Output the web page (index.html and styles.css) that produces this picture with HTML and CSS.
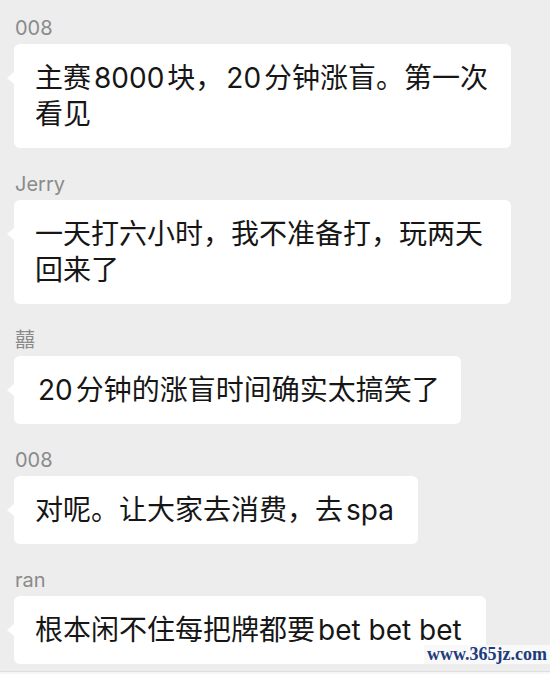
FILE: index.html
```html
<!DOCTYPE html>
<html lang="zh-CN">
<head>
<meta charset="utf-8">
<title>Chat</title>
<link rel="stylesheet" href="styles.css">
</head>
<body>
<div class="page">
  <main class="chat">
    <div class="msg">
      <div class="name">008</div>
      <div class="bubble">主赛<span class="lat">8000</span>块，<span class="lat">20</span>分钟涨盲。第一次看见</div>
    </div>
    <div class="msg">
      <div class="name">Jerry</div>
      <div class="bubble">一天打六小时，我不准备打，玩两天回来了</div>
    </div>
    <div class="msg">
      <div class="name">囍</div>
      <div class="bubble"><span class="lat">20</span>分钟的涨盲时间确实太搞笑了</div>
    </div>
    <div class="msg">
      <div class="name">008</div>
      <div class="bubble">对呢。让大家去消费，去<span class="lat">spa</span></div>
    </div>
    <div class="msg">
      <div class="name">ran</div>
      <div class="bubble">根本闲不住每把牌都要<span class="lat">bet bet bet</span></div>
    </div>
  </main>
  <div class="footer"></div>
  <div class="watermark">www.365jz.com</div>
</div>
</body>
</html>
```
FILE: styles.css
```css
* { box-sizing: border-box; }
html, body {
  margin: 0;
  padding: 0;
  background: #ededed;
}
.page {
  position: relative;
  width: 550px;
  height: 674px;
  overflow: hidden;
  font-family: "Inter", "Noto Sans CJK SC", sans-serif;
}
.chat {
  display: flex;
  flex-direction: column;
  gap: 22px;
  padding: 14px 0 0 14px;
}
.msg {
  display: flex;
  flex-direction: column;
  align-items: flex-start;
}
.name {
  font-size: 20px;
  line-height: 24px;
  color: #8a8a8a;
  padding-top: 2px;
  margin: 0 0 4px 1px;
}
.bubble {
  position: relative;
  background: #ffffff;
  border-radius: 6px;
  padding: 16px 21px;
  font-size: 28px;
  line-height: 36px;
  color: #161616;
  max-width: 497px;
}
.bubble::before {
  content: "";
  position: absolute;
  left: -7px;
  top: 28px;
  border-style: solid;
  border-width: 6px 7px 6px 0;
  border-color: transparent #ffffff transparent transparent;
}
.lat {
  margin: 0 3px;
}
.footer {
  position: absolute;
  left: 0;
  right: 0;
  bottom: 0;
  height: 3px;
  border-top: 1px solid #dedede;
  background: #f6f6f6;
}
.watermark {
  position: absolute;
  right: 0;
  bottom: 10px;
  width: 126px;
  height: 19px;
  background: #f9f9f9;
  color: #1d3c7c;
  font-family: "Liberation Serif", serif;
  font-size: 18px;
  line-height: 19px;
  font-weight: bold;
  text-align: center;
}
```
